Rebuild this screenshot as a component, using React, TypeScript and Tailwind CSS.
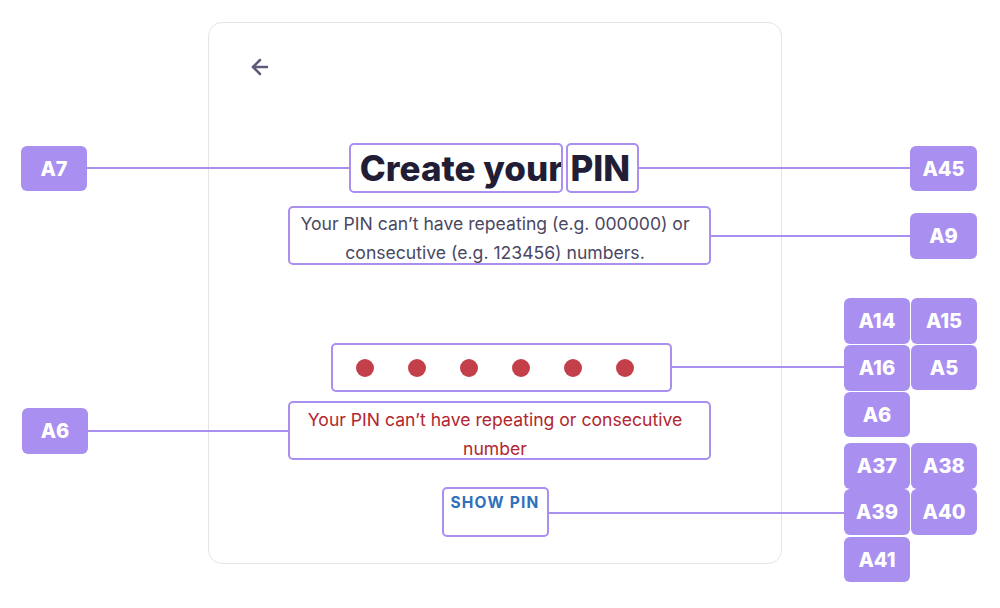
import { ArrowLeft } from 'lucide-react';

const font = { fontFamily: 'Inter, "Open Sans", sans-serif' };

interface Box {
  x: number;
  y: number;
  w: number;
  h: number;
}

interface Tag extends Box {
  label: string;
}

const boxes: Box[] = [
  { x: 349, y: 143, w: 214, h: 50 },
  { x: 566, y: 143, w: 73, h: 50 },
  { x: 288, y: 206, w: 423, h: 59 },
  { x: 331, y: 343, w: 341, h: 49 },
  { x: 288, y: 401, w: 423, h: 59 },
  { x: 442, y: 487, w: 107, h: 50 },
];

const tags: Tag[] = [
  { label: 'A7', x: 21, y: 146, w: 66, h: 45 },
  { label: 'A45', x: 910, y: 146, w: 67, h: 45 },
  { label: 'A9', x: 910, y: 213, w: 67, h: 46 },
  { label: 'A6', x: 22, y: 408, w: 66, h: 46 },
  { label: 'A14', x: 844, y: 298, w: 66, h: 46 },
  { label: 'A15', x: 911, y: 298, w: 66, h: 46 },
  { label: 'A16', x: 844, y: 345, w: 66, h: 46 },
  { label: 'A5', x: 911, y: 345, w: 66, h: 45 },
  { label: 'A6', x: 844, y: 392, w: 66, h: 45 },
  { label: 'A37', x: 844, y: 443, w: 66, h: 46 },
  { label: 'A38', x: 911, y: 443, w: 66, h: 46 },
  { label: 'A39', x: 844, y: 489, w: 66, h: 46 },
  { label: 'A40', x: 911, y: 489, w: 66, h: 46 },
  { label: 'A41', x: 844, y: 537, w: 66, h: 45 },
];

// connector lines: [x1, x2, y]
const lines: [number, number, number][] = [
  [87, 349, 168],
  [639, 910, 168],
  [711, 910, 236],
  [88, 288, 431],
  [672, 844, 367],
  [549, 844, 513],
];

function Overlay() {
  return (
    <div className="pointer-events-none absolute inset-0">
      {lines.map(([x1, x2, y], i) => (
        <div
          key={'l' + i}
          className="absolute h-[2px] bg-[#a98fef]"
          style={{ left: x1, width: x2 - x1, top: y - 1 }}
        />
      ))}
      {boxes.map((b, i) => (
        <div
          key={'b' + i}
          className="absolute rounded-[5px] border-2 border-[#a98fef]"
          style={{ left: b.x, top: b.y, width: b.w, height: b.h }}
        />
      ))}
      {tags.map((t, i) => (
        <div
          key={'t' + i}
          className="absolute flex items-center justify-center rounded-[6px] bg-[#a98fef] text-[20px] font-extrabold text-white"
          style={{ left: t.x, top: t.y, width: t.w, height: t.h }}
        >
          {t.label}
        </div>
      ))}
    </div>
  );
}

export default function App() {
  return (
    <div className="relative h-[608px] w-[1000px] bg-white" style={font}>
      <div className="pl-[208px] pt-[22px]">
        <div className="flex h-[542px] w-[574px] flex-col items-center rounded-[14px] border border-[#e5e5e8] bg-white">
          <div className="mt-[32px] flex w-full pl-[39px]">
            <ArrowLeft size={24} strokeWidth={2.5} className="text-[#5e5a78]" />
          </div>
          <h1 className="mt-[69px] text-[35px] font-extrabold leading-[40px] text-[#221d36]">
            Create your PIN
          </h1>
          <p className="mt-[21px] w-[420px] text-center text-[17.6px] leading-[29px] text-[#4b4762]">
            Your PIN can’t have repeating (e.g. 000000) or consecutive (e.g. 123456) numbers.
          </p>
          <div className="mt-[92px] flex gap-[34px]">
            {[0, 1, 2, 3, 4, 5].map((i) => (
              <span key={i} className="h-[18px] w-[18px] rounded-full bg-[#c3404a]" />
            ))}
          </div>
          <p className="mt-[28px] w-[404px] text-center text-[17.6px] leading-[29px] text-[#b3252f]">
            Your PIN can’t have repeating or consecutive number
          </p>
          <button className="mt-[30px] text-[15.5px] font-bold leading-[20px] tracking-[0.08em] text-[#2f70bb]">
            SHOW PIN
          </button>
        </div>
      </div>
      <Overlay />
    </div>
  );
}
